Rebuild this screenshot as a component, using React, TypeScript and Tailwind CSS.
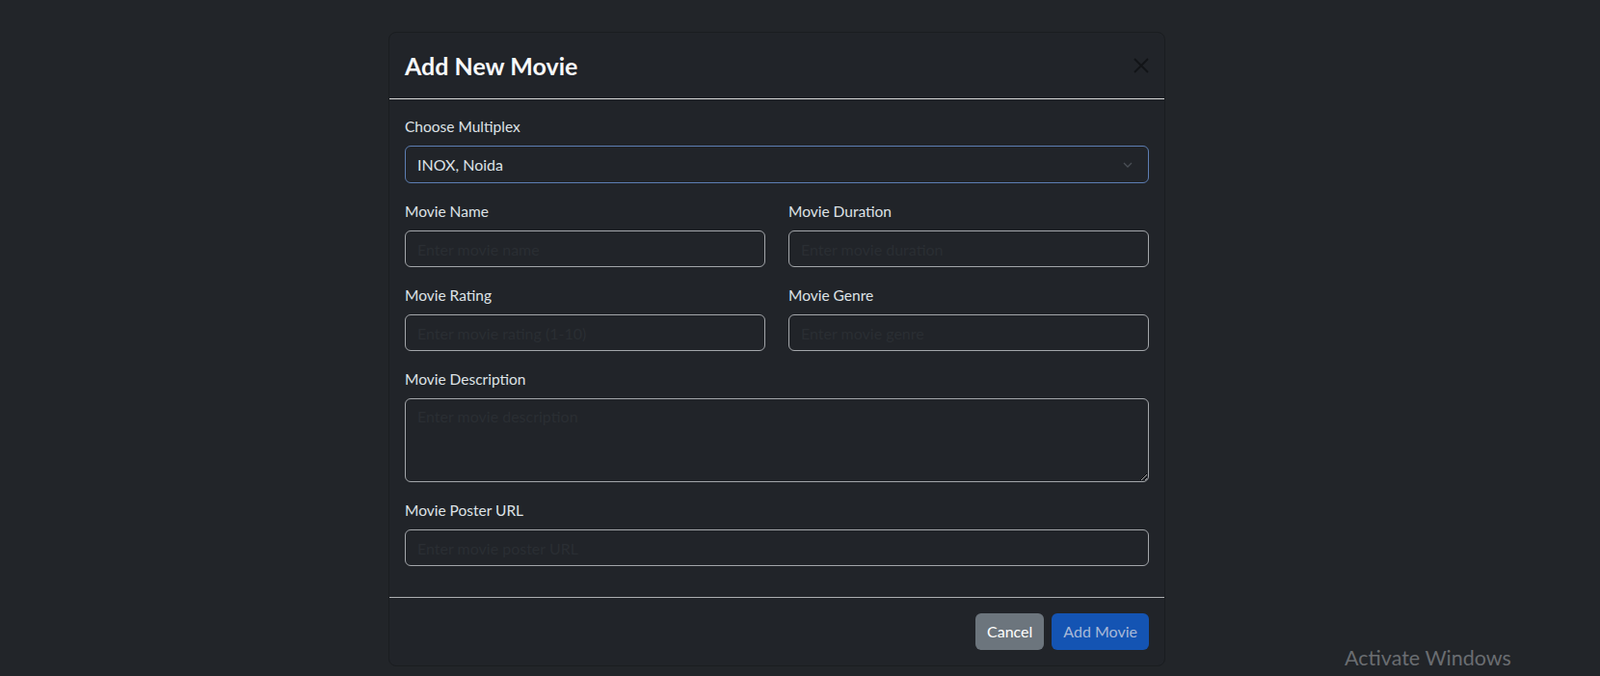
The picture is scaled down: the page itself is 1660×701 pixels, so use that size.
import React, { useState } from 'react';

const labelClass = 'block mb-2 text-[15.5px] leading-6 text-[#dee2e6]';

const fieldClass =
  'w-full h-[38px] rounded-md border border-[#a3a6aa] bg-[#212429] px-3 text-[16px] text-[#dee2e6] outline-none placeholder:text-[#2a2e33]';

const Field = ({ label, placeholder }: { label: string; placeholder: string }) => (
  <div className="mb-[17px]">
    <label className={labelClass}>{label}</label>
    <input type="text" placeholder={placeholder} className={fieldClass} />
  </div>
);

export default function App() {
  const [multiplex, setMultiplex] = useState('inox-noida');

  return (
    <div
      className="relative h-[701px] w-full overflow-hidden bg-[#222529] pt-[33px]"
      style={{ fontFamily: 'Lato, "Open Sans", sans-serif' }}
    >
      <div className="ml-[403px] w-[806px] rounded-lg border border-[#1a1d20] bg-[#212429]">
        {/* Header */}
        <div className="flex h-[69px] items-center justify-between border-b border-[#d9d9d9] px-4">
          <h3 className="text-[25px] font-bold leading-9 text-[#f8f9fa]">Add New Movie</h3>
          <button className="flex h-4 w-4 items-center justify-center">
            <svg width="16" height="16" viewBox="0 0 16 16">
              <path d="M1 1 L15 15 M15 1 L1 15" stroke="#121417" strokeWidth="1.8" />
            </svg>
          </button>
        </div>

        {/* Body */}
        <div className="p-4">
          <div className="mb-[17px]">
            <label className={labelClass}>Choose Multiplex</label>
            <div className="relative">
              <select
                value={multiplex}
                onChange={(e) => setMultiplex(e.target.value)}
                className="h-[39px] w-full appearance-none rounded-md border border-[#5d7eb3] bg-[#212429] px-3 text-[16px] text-[#dee2e6] outline-none"
              >
                <option value="inox-noida">INOX, Noida</option>
                <option value="pvr-delhi">PVR, Delhi</option>
              </select>
              <svg
                className="pointer-events-none absolute right-[17px] top-[17px]"
                width="10"
                height="6"
                viewBox="0 0 10 6"
              >
                <path d="M1 1 L5 5 L9 1" fill="none" stroke="#4a4f56" strokeWidth="1.3" />
              </svg>
            </div>
          </div>

          <div className="grid grid-cols-2 gap-x-6">
            <Field label="Movie Name" placeholder="Enter movie name" />
            <Field label="Movie Duration" placeholder="Enter movie duration" />
            <Field label="Movie Rating" placeholder="Enter movie rating (1-10)" />
            <Field label="Movie Genre" placeholder="Enter movie genre" />
          </div>

          <div className="mb-[17px]">
            <label className={labelClass}>Movie Description</label>
            <textarea
              rows={3}
              placeholder="Enter movie description"
              className="block h-[87px] w-full rounded-md border border-[#a3a6aa] bg-[#212429] px-3 py-1.5 text-[16px] text-[#dee2e6] outline-none placeholder:text-[#2a2e33]"
            />
          </div>

          <div>
            <label className={labelClass}>Movie Poster URL</label>
            <input type="text" placeholder="Enter movie poster URL" className={fieldClass} />
          </div>
          <div className="h-4" />
        </div>

        {/* Footer */}
        <div className="flex items-center justify-end border-t border-[#adafb1] p-3">
          <button className="m-1 h-[38px] rounded-md bg-[#6c757d] px-3 text-[16px] text-white">Cancel</button>
          <button disabled className="m-1 h-[38px] rounded-md bg-[#1454b3] px-3 text-[16px] text-[#a8b9d8]">
            Add Movie
          </button>
        </div>
      </div>

      <div className="absolute left-[1395px] top-[668px] text-[21.5px] leading-7 text-[#6a6d71]">Activate Windows</div>
    </div>
  );
}
